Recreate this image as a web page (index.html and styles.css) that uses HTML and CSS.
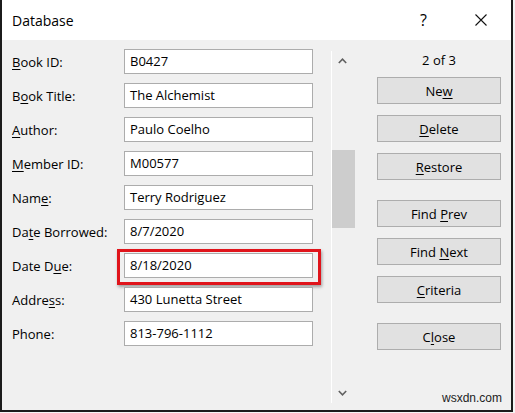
FILE: index.html
```html
<!DOCTYPE html>
<html lang="en">
<head>
    <meta charset="UTF-8">
    <meta name="viewport" content="width=device-width, initial-scale=1.0">
    <title>Database</title>
    <link rel="stylesheet" href="styles.css">
</head>
<body>
    <div class="dialog">
        <div class="titlebar">
            <span class="title">Database</span>
            <span class="help">?</span>
            <span class="close-x">
                <svg width="12" height="12" viewBox="0 0 12 12">
                    <path d="M0.5 0.5 L11.5 11.5 M11.5 0.5 L0.5 11.5" stroke="#111" stroke-width="1.1" fill="none"/>
                </svg>
            </span>
        </div>

        <div class="content">
            <div class="fields">
                <div class="row"><label><u>B</u>ook ID:</label><div class="box">B0427</div></div>
                <div class="row"><label>B<u>o</u>ok Title:</label><div class="box">The Alchemist</div></div>
                <div class="row"><label><u>A</u>uthor:</label><div class="box">Paulo Coelho</div></div>
                <div class="row"><label><u>M</u>ember ID:</label><div class="box">M00577</div></div>
                <div class="row"><label>Nam<u>e</u>:</label><div class="box">Terry Rodriguez</div></div>
                <div class="row"><label>Da<u>t</u>e Borrowed:</label><div class="box">8/7/2020</div></div>
                <div class="row"><label>Date D<u>u</u>e:</label><div class="box marked">8/18/2020</div></div>
                <div class="row"><label>Addre<u>s</u>s:</label><div class="box">430 Lunetta Street</div></div>
                <div class="row"><label>Phone:</label><div class="box">813-796-1112</div></div>
            </div>

            <div class="scrollbar">
                <div class="arrow">
                    <svg width="9" height="6" viewBox="0 0 9 6"><polyline points="0.8,5 4.5,1.2 8.2,5" stroke="#606060" stroke-width="1.6" fill="none"/></svg>
                </div>
                <div class="track"><div class="thumb"></div></div>
                <div class="arrow">
                    <svg width="9" height="6" viewBox="0 0 9 6"><polyline points="0.8,1 4.5,4.8 8.2,1" stroke="#606060" stroke-width="1.6" fill="none"/></svg>
                </div>
            </div>

            <div class="actions">
                <div class="counter">2 of 3</div>
                <button>Ne<u>w</u></button>
                <button><u>D</u>elete</button>
                <button><u>R</u>estore</button>
                <button class="spaced">Find <u>P</u>rev</button>
                <button>Find <u>N</u>ext</button>
                <button><u>C</u>riteria</button>
                <button class="spaced">C<u>l</u>ose</button>
            </div>
        </div>

        <div class="watermark">wsxdn.com</div>
    </div>
</body>
</html>
```

FILE: styles.css
```css
body {
    margin: 0;
    background-color: #f4f4f4;
    font-family: 'Open Sans', 'Noto Sans', sans-serif;
    font-size: 13px;
    color: #000;
}

.dialog {
    position: relative;
    width: 509px;
    height: 410px;
    border: 2px solid #1b1b1b;
    border-top: 0;
    background-color: #f0f0f0;
}

/* title bar */
.titlebar {
    height: 40px;
    background-color: #fff;
    display: flex;
    align-items: center;
    padding-left: 10px;
}

.title {
    font-size: 14px;
    flex: 1;
}

.help {
    font-size: 16px;
    width: 55px;
}

.close-x {
    display: flex;
    width: 36px;
    padding-bottom: 1px;
}

.content {
    display: flex;
    height: 370px;
}

/* left column with the record fields */
.fields {
    width: 319px;
    padding: 9px 0 0 10px;
    display: flex;
    flex-direction: column;
    gap: 9px;
}

.row {
    display: flex;
    align-items: center;
    height: 25px;
}

.row label {
    width: 112px;
}

.box {
    position: relative;
    width: 182px;
    height: 23px;
    line-height: 23px;
    padding-left: 5px;
    background-color: #fff;
    border: 1px solid #acacac;
}

.marked::after {
    content: '';
    position: absolute;
    left: -8px;
    top: -5px;
    right: -9px;
    bottom: -8px;
    border: 3px solid #e0141b;
    box-shadow: 1px 2px 3px rgba(0, 0, 0, 0.35);
}

u {
    text-decoration-thickness: 1px;
    text-underline-offset: 2px;
}

/* scrollbar */
.scrollbar {
    width: 23px;
    margin: 11px 0 7px;
    border-left: 1px solid #fff;
    display: flex;
    flex-direction: column;
}

.arrow {
    height: 20px;
    display: flex;
    justify-content: center;
    align-items: center;
    padding-right: 2px;
}

.track {
    flex: 1;
}

.thumb {
    margin-top: 79px;
    height: 78px;
    background-color: #cdcdcd;
}

/* buttons */
.actions {
    flex: 1;
    padding: 10px 10px 0 22px;
    display: flex;
    flex-direction: column;
    gap: 11px;
}

.counter {
    height: 20px;
    line-height: 20px;
    text-align: center;
    margin-bottom: -4px;
}

.actions button {
    height: 27px;
    font-family: inherit;
    font-size: 13px;
    color: #000;
    background-color: #e1e1e1;
    border: 1px solid #adadad;
    padding: 0;
}

.actions .spaced {
    margin-top: 9px;
}

.watermark {
    position: absolute;
    right: 9px;
    bottom: 5px;
    font-family: 'Liberation Sans', sans-serif;
    font-size: 12px;
    color: #222;
}
```
